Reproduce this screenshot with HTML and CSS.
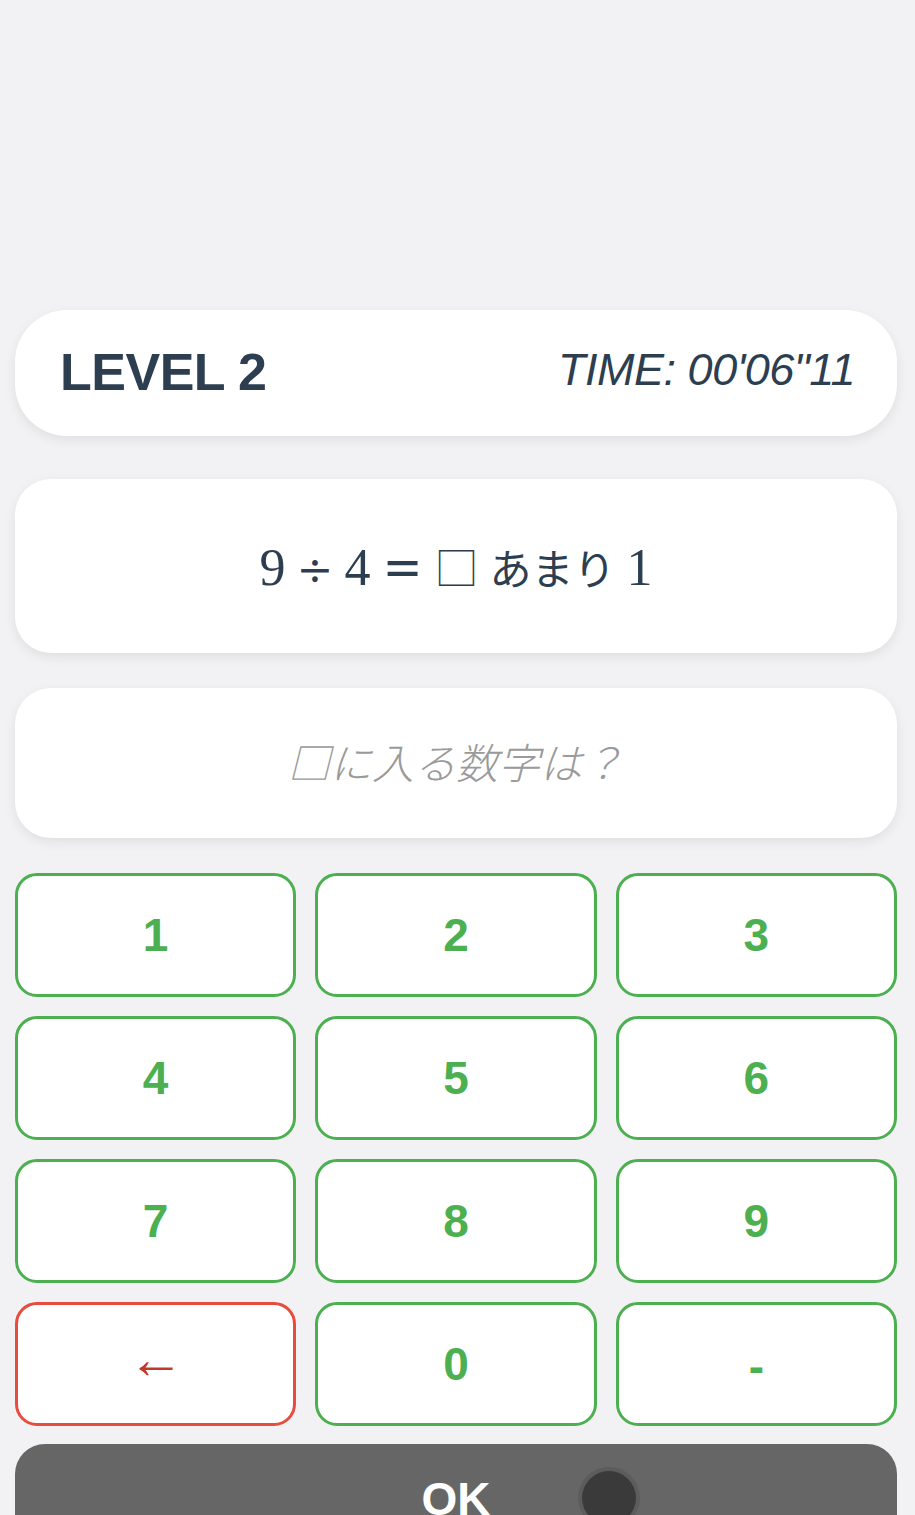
FILE: index.html
```html
<!DOCTYPE html>
<html lang="ja">
<head>
<meta charset="utf-8">
<title>LEVEL 2</title>
<link rel="stylesheet" href="styles.css">
</head>
<body>
<main class="app">
  <header class="status-card">
    <h1 class="level">LEVEL 2</h1>
    <div class="timer">TIME: 00'06"11</div>
  </header>
  <section class="question-card">
    <p class="question"><span class="num">9</span> <span class="op">÷</span> <span class="num">4</span> <span class="eq">＝</span> <span class="box">□</span> <span class="jp">あまり</span> <span class="num">1</span></p>
  </section>
  <section class="answer-card">
    <p class="placeholder">□に入る数字は？</p>
  </section>
  <section class="keypad">
    <button class="key">1</button>
    <button class="key">2</button>
    <button class="key">3</button>
    <button class="key">4</button>
    <button class="key">5</button>
    <button class="key">6</button>
    <button class="key">7</button>
    <button class="key">8</button>
    <button class="key">9</button>
    <button class="key key-back">←</button>
    <button class="key">0</button>
    <button class="key key-minus">-</button>
  </section>
  <button class="ok-button">OK<span class="touch-dot"></span></button>
</main>
</body>
</html>
```
FILE: styles.css
```css
html, body {
  margin: 0;
  padding: 0;
  background: #f2f2f5;
  overflow: hidden;
}

.app {
  box-sizing: border-box;
  width: 915px;
  padding: 310px 18px 0 15px;
  display: flex;
  flex-direction: column;
  font-family: "Liberation Sans", Arial, sans-serif;
  color: #2c3e50;
}

.status-card {
  height: 126px;
  box-sizing: border-box;
  background: #fff;
  border-radius: 52px;
  box-shadow: 0 4px 12px rgba(0, 0, 0, 0.08);
  display: flex;
  align-items: center;
  justify-content: space-between;
  padding: 0 42px 0 45px;
}

.level {
  margin: 0;
  font-size: 52px;
  font-weight: 700;
  letter-spacing: -0.5px;
  color: #2c3e50;
  line-height: 1;
  padding-bottom: 2px;
}

.timer {
  font-size: 45px;
  font-style: italic;
  font-weight: 400;
  letter-spacing: -0.5px;
  line-height: 1;
  color: #2c3e50;
  padding-bottom: 8px;
}

.question-card {
  margin-top: 43px;
  height: 174px;
  background: #fff;
  border-radius: 36px;
  box-shadow: 0 4px 12px rgba(0, 0, 0, 0.08);
  display: flex;
  align-items: center;
  justify-content: center;
}

.question {
  margin: 0;
  font-family: "Liberation Serif", "Noto Sans CJK JP", serif;
  font-size: 52px;
  line-height: 1;
  color: #2c3e50;
  white-space: nowrap;
  padding-top: 4px;
  word-spacing: -2px;
}

.question .op {
  font-family: "DejaVu Serif", serif;
  font-size: 44px;
}

.question .eq,
.question .jp {
  font-family: "Noto Sans CJK JP", sans-serif;
  font-size: 42px;
  font-weight: 400;
}

.question .eq {
  font-weight: 700;
}

.question .box {
  font-family: "Noto Sans CJK JP", sans-serif;
  font-size: 44px;
  font-weight: 300;
}

.answer-card {
  margin-top: 35px;
  height: 150px;
  background: #fff;
  border-radius: 36px;
  box-shadow: 0 4px 12px rgba(0, 0, 0, 0.08);
  display: flex;
  align-items: center;
  justify-content: center;
}

.placeholder {
  margin: 0;
  font-family: "Noto Sans CJK JP", sans-serif;
  font-size: 42px;
  font-style: italic;
  font-weight: 300;
  color: #9a9a9a;
  line-height: 1;
  padding-bottom: 4px;
}

.keypad {
  margin-top: 35px;
  display: grid;
  grid-template-columns: repeat(3, 1fr);
  grid-auto-rows: 124px;
  gap: 19px 19px;
}

.key {
  margin: 0;
  box-sizing: border-box;
  background: #fff;
  border: 3px solid #4caf50;
  border-radius: 22px;
  color: #4caf50;
  font-family: "Liberation Sans", Arial, sans-serif;
  font-size: 46px;
  font-weight: 700;
  line-height: 1;
  padding: 0;
  display: flex;
  align-items: center;
  justify-content: center;
}

.key-back {
  border-color: #e74c3c;
  color: #c0392b;
  font-weight: 400;
  font-size: 56px;
  font-family: "Liberation Serif", serif;
  padding: 0 0 10px;
}

.key-minus {
  padding-top: 4px;
}

.ok-button {
  position: relative;
  margin-top: 18px;
  height: 130px;
  border: none;
  border-radius: 30px;
  background: #666666;
  color: #fff;
  font-family: "Liberation Sans", Arial, sans-serif;
  font-size: 46px;
  font-weight: 700;
  display: flex;
  justify-content: center;
  align-items: flex-start;
  padding: 32px 0 0;
  line-height: 1;
}

.touch-dot {
  position: absolute;
  left: 567px;
  top: 27px;
  width: 54px;
  height: 54px;
  border-radius: 50%;
  background: #3a3a3a;
  box-shadow: 0 0 0 4px rgba(90, 90, 90, 0.8);
}
```
